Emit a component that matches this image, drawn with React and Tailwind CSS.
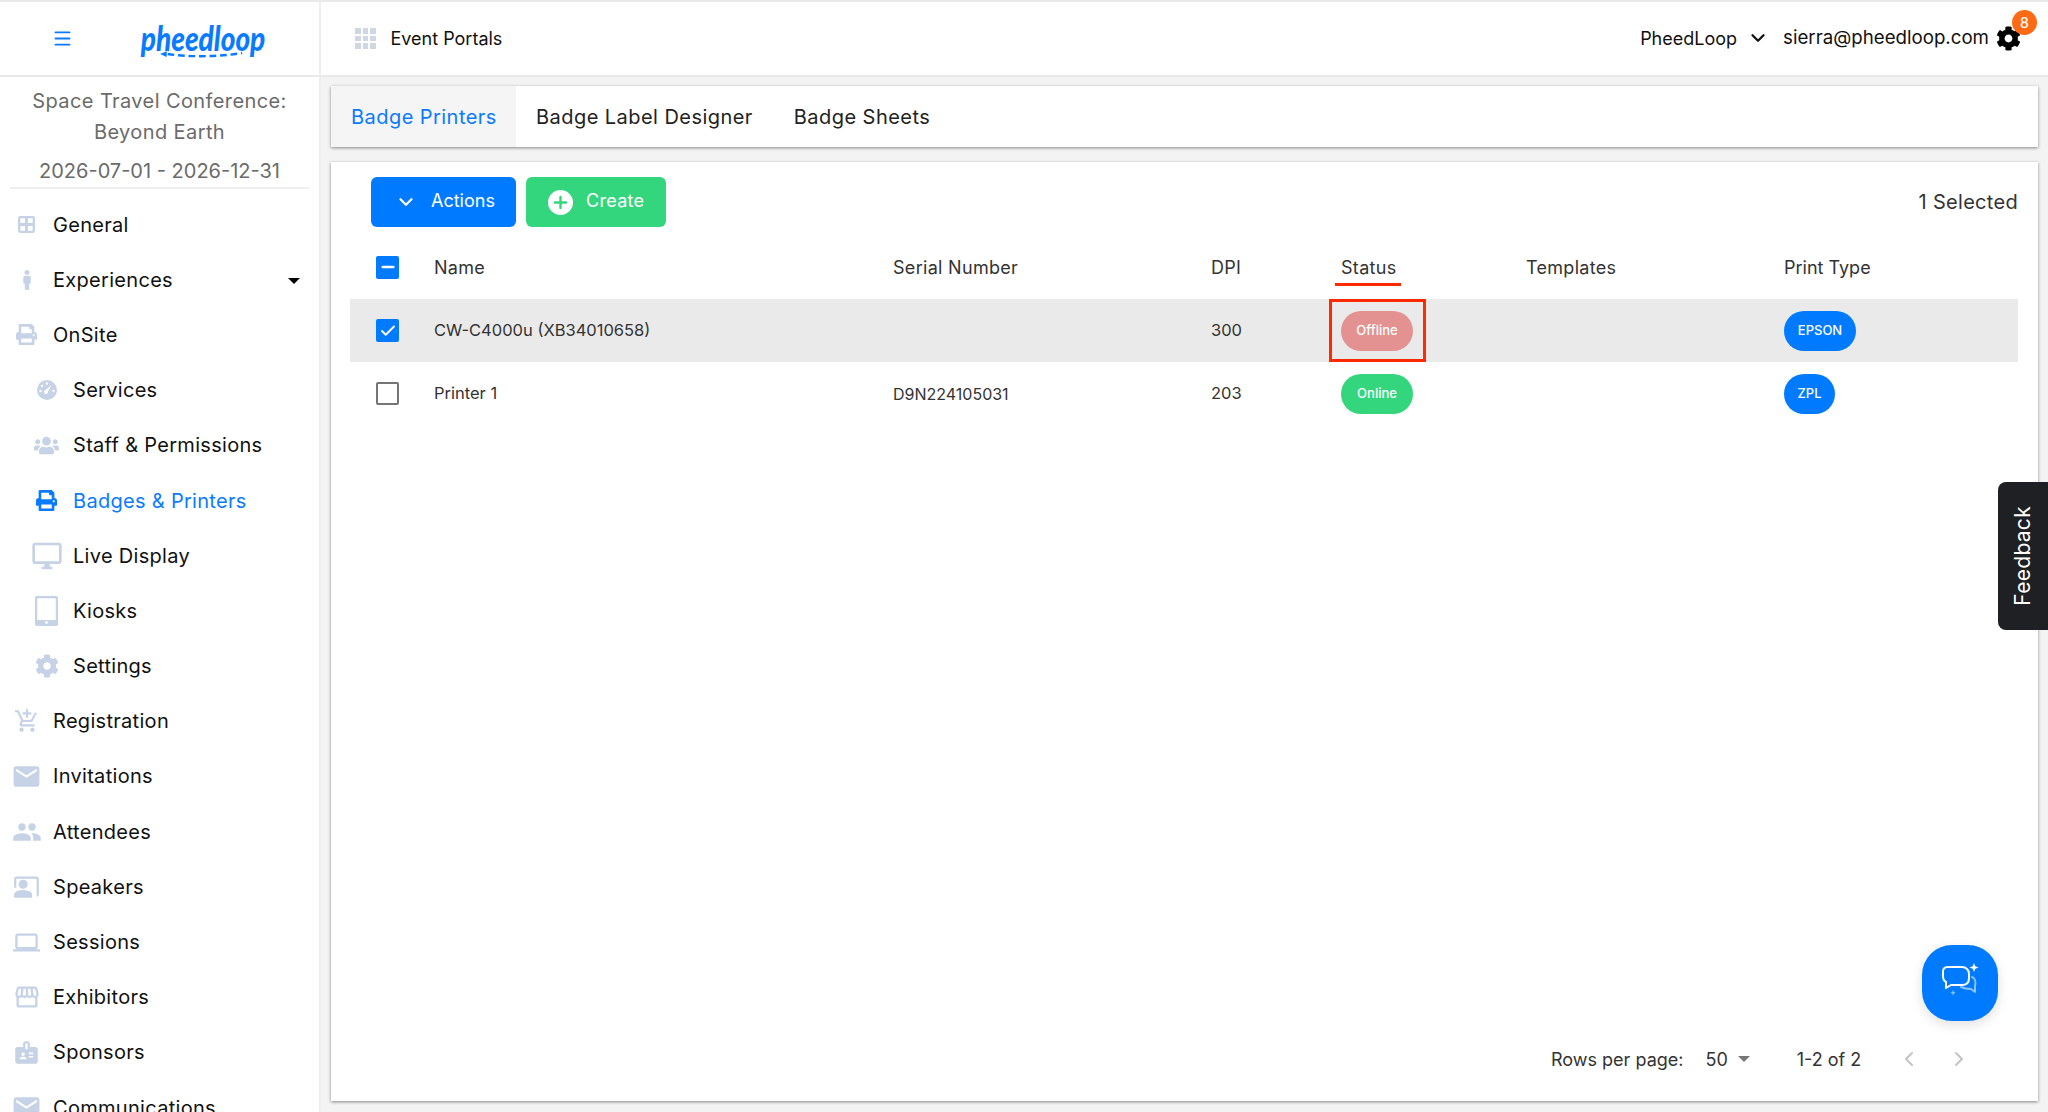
import { ChevronDown, ChevronLeft, ChevronRight, Menu, Check, Minus, Plus } from 'lucide-react';
import { FaMale, FaPrint, FaUsers, FaCog } from 'react-icons/fa';
import {
  MdOutlineDesktopWindows,
  MdAddShoppingCart,
  MdEmail,
  MdPeople,
  MdCoPresent,
  MdOutlineLaptop,
  MdOutlineStorefront,
  MdBadge,
} from 'react-icons/md';

const FONT = 'font-["Inter","Open_Sans",sans-serif]';

const GridIcon = ({ className }) => (
  <svg viewBox="0 0 18 18" className={className} fill="currentColor">
    <path d="M2.5 0h13A2.5 2.5 0 0 1 18 2.500v13a2.500 2.500 0 0 1-2.500 2.500h-13A2.500 2.500 0 0 1 0 15.500v-13A2.500 2.500 0 0 1 2.500 0zM2.500 2.500v5h5v-5zm8 0v5h5v-5zm-8 8v5h5v-5zm8 0v5h5v-5z" fillRule="evenodd" />
  </svg>
);

const GaugeIcon = ({ className }) => (
  <svg viewBox="0 0 20 20" className={className}>
    <circle cx="10" cy="10" r="10" fill="currentColor" />
    <circle cx="10" cy="3.500" r="1.200" fill="#fff" />
    <circle cx="5" cy="6" r="1.200" fill="#fff" />
    <circle cx="3.500" cy="11" r="1.200" fill="#fff" />
    <circle cx="16.500" cy="11" r="1.200" fill="#fff" />
    <path d="M14.500 5 L11 11.500 A2 2 0 1 1 8.600 10 z" fill="#fff" />
  </svg>
);

const TabletIcon = ({ className }) => (
  <svg viewBox="0 0 23 30" className={className}>
    <rect x="1" y="1" width="21" height="28" rx="2" fill="none" stroke="currentColor" strokeWidth="2.500" />
    <rect x="1" y="24" width="21" height="5" rx="1.500" fill="currentColor" />
    <circle cx="11.500" cy="26.500" r="1.400" fill="#fff" />
  </svg>
);

const NAV = [
  { label: 'General', icon: GridIcon, size: 'w-[17px] h-[17px]' },
  { label: 'Experiences', icon: FaMale, size: 'w-[20px] h-[20px]', caret: true },
  { label: 'OnSite', icon: FaPrint, size: 'w-[21px] h-[21px]' },
  { label: 'Services', icon: GaugeIcon, size: 'w-[20px] h-[20px]', sub: true },
  { label: 'Staff & Permissions', icon: FaUsers, size: 'w-[25px] h-[25px]', sub: true },
  { label: 'Badges & Printers', icon: FaPrint, size: 'w-[21px] h-[21px]', sub: true, active: true },
  { label: 'Live Display', icon: MdOutlineDesktopWindows, size: 'w-[32px] h-[32px]', sub: true },
  { label: 'Kiosks', icon: TabletIcon, size: 'w-[23px] h-[30px]', sub: true },
  { label: 'Settings', icon: FaCog, size: 'w-[24px] h-[24px]', sub: true },
  { label: 'Registration', icon: MdAddShoppingCart, size: 'w-[26px] h-[26px]' },
  { label: 'Invitations', icon: MdEmail, size: 'w-[31px] h-[31px]' },
  { label: 'Attendees', icon: MdPeople, size: 'w-[30px] h-[30px]' },
  { label: 'Speakers', icon: MdCoPresent, size: 'w-[27px] h-[27px]' },
  { label: 'Sessions', icon: MdOutlineLaptop, size: 'w-[27px] h-[27px]' },
  { label: 'Exhibitors', icon: MdOutlineStorefront, size: 'w-[28px] h-[28px]' },
  { label: 'Sponsors', icon: MdBadge, size: 'w-[27px] h-[27px]' },
  { label: 'Communications', icon: MdEmail, size: 'w-[31px] h-[31px]' },
];

const COLS = 'grid grid-cols-[84px_459px_318px_130px_185px_258px_234px] items-center';

function Checkbox({ state }) {
  if (state === 'off') {
    return <span className="block w-[23px] h-[23px] rounded-[2px] border-[2.5px] border-[#757575] bg-white" />;
  }
  return (
    <span className="flex items-center justify-center w-[23px] h-[23px] rounded-[2px] bg-[#007bff] text-white">
      {state === 'on' ? <Check size={18} strokeWidth={2.5} /> : <Minus size={18} strokeWidth={3.5} />}
    </span>
  );
}

function Pill({ children, className }) {
  return (
    <span className={`inline-flex items-center justify-center h-[40px] rounded-[20px] text-[13px] font-medium text-white ${className}`}>
      {children}
    </span>
  );
}

function Logo() {
  return (
    <div className="flex flex-col items-center text-[#0a7bff] w-[126px]">
      <span className="font-['Lato',sans-serif] italic font-black text-[28px] leading-[36px] scale-y-125">pheedloop</span>
      <svg viewBox="0 0 90 8" className="relative w-[86px] h-[8px] -mt-[4px]">
        <path d="M0 3 L7 0 L7 6 Z" fill="currentColor" />
        <path d="M8 3 Q45 8 86 2" fill="none" stroke="currentColor" strokeWidth="2.500" strokeDasharray="7 4" />
      </svg>
    </div>
  );
}

function ChatGlyph() {
  return (
    <svg viewBox="0 0 48 48" className="w-[48px] h-[48px]" fill="none" stroke="currentColor" strokeLinejoin="round" strokeLinecap="round">
      <path d="M11 8h15c4 0 7 3 7 7v4c0 5-3 7-7 7H15l-5 3 0-6c-2-1-3-3-3-6v-5c0-2 2-4 4-4z" strokeWidth="2" />
      <path d="M38 4l1.300 3.200L42.500 8.500 39.300 9.800 38 13l-1.300-3.200L33.500 8.500l3.200-1.300z" fill="currentColor" stroke="none" />
      <path d="M36 18c3 1 4 5 3 9l0 6-4-3c-3 0-6 0-10-2" strokeWidth="2" opacity="0.55" />
      <path d="M17 31l.8 2 2 .8-2 .8-.8 2-.8-2-2-.8 2-.8z" fill="currentColor" stroke="none" opacity="0.55" />
    </svg>
  );
}

export default function App() {
  return (
    <div className={`relative h-[1112px] w-full overflow-hidden bg-[#f3f3f3] text-[#212529] ${FONT}`}>
      {/* top bar */}
      <header className="flex h-[77px] border-t-2 border-b-2 border-[#e9e9e9] bg-white">
        <div className="flex w-[321px] shrink-0 items-center border-r-2 border-[#eeeeee]">
          <Menu size={21} strokeWidth={2.2} className="ml-[52px] text-[#0a7bff]" />
          <div className="ml-[67px]">
            <Logo />
          </div>
        </div>
        <div className="flex flex-1 items-center pl-[34px] pr-[27px]">
          <div className="grid grid-cols-3 gap-[2px] mr-[15px]">
            {Array.from({ length: 9 }).map((_, i) => (
              <span key={i} className="w-[5.500px] h-[5.500px] bg-[#cfd6e4]" />
            ))}
          </div>
          <span className="pb-[1px] text-[18px] text-[#111]">Event Portals</span>
          <div className="ml-auto flex items-center">
            <span className="text-[18px] text-[#111]">PheedLoop</span>
            <ChevronDown size={22} strokeWidth={2.5} className="ml-[10px] text-[#111]" />
            <span className="ml-[14px] text-[18.700px] text-[#111]">sierra@pheedloop.com</span>
            <span className="relative ml-[7px]">
              <FaCog className="w-[25px] h-[25px] text-black" />
              <span className="absolute -top-[16px] left-[16px] flex h-[25px] w-[25px] items-center justify-center rounded-full bg-[#ff6a13] text-[14px] font-medium text-white">
                8
              </span>
            </span>
          </div>
        </div>
      </header>

      <div className="flex h-[1035px]">
        {/* sidebar */}
        <aside className="w-[321px] shrink-0 overflow-hidden border-r-2 border-[#eeeeee] bg-white">
          <div className="mx-[10px] border-b-2 border-[#f0f0f0] pt-[9px] text-center text-[20px] leading-[31px] text-[#6b6b6b]">
            <p className="tracking-[0.4px]">Space Travel Conference:</p>
            <p className="tracking-[0.4px]">Beyond Earth</p>
            <p className="mt-[8px]">2026-07-01 - 2026-12-31</p>
          </div>
          <nav className="mt-[8px]">
            {NAV.map(({ label, icon: Icon, size, sub, active, caret }) => (
              <div key={label} className="relative flex h-[55.200px] items-center">
                <span className={`flex w-[53px] shrink-0 items-center justify-center ${sub ? 'ml-[20px]' : ''} ${active ? 'text-[#0a7bff]' : 'text-[#c6d2e5]'}`}>
                  <Icon className={size} />
                </span>
                <span className={`text-[20px] tracking-[0.3px] ${active ? 'text-[#0a7bff]' : 'text-[#111]'}`}>{label}</span>
                {caret && (
                  <span className="absolute right-[19px] top-[26px] h-0 w-0 border-x-[6px] border-t-[6px] border-x-transparent border-t-black" />
                )}
              </div>
            ))}
          </nav>
        </aside>

        {/* content */}
        <main className="flex min-w-0 flex-1 flex-col gap-[15px] px-[10px] pt-[9px] pb-[11px]">
          <div className="flex h-[61px] shrink-0 items-stretch bg-white text-[20px] tracking-[0.45px] shadow-[0_1px_3px_rgba(0,0,0,0.45)]">
            <div className="flex w-[185px] items-center bg-[#f5f5f5] pl-[20px] text-[#0a7bff]">Badge Printers</div>
            <div className="flex items-center pl-[20px] text-[#222]">Badge Label Designer</div>
            <div className="flex items-center pl-[41px] text-[#222]">Badge Sheets</div>
          </div>

          <section className="flex flex-1 flex-col bg-white pl-[19px] pr-[20px] pt-[15px] shadow-[0_1px_3px_rgba(0,0,0,0.45)]">
            <div className="flex items-center pl-[21px]">
              <button className="flex h-[50px] w-[145px] items-center rounded-[6px] bg-[#007bff] pl-[24px] text-[18px] text-white">
                <ChevronDown size={22} strokeWidth={2.5} />
                <span className="ml-[14px] pb-[3px]">Actions</span>
              </button>
              <button className="ml-[10px] flex h-[50px] w-[140px] items-center rounded-[6px] bg-[#34d67d] pl-[22px] text-[18px] tracking-[0.3px] text-white">
                <span className="flex h-[25px] w-[25px] items-center justify-center rounded-full bg-white text-[#34d67d]">
                  <Plus size={19} strokeWidth={3} />
                </span>
                <span className="ml-[13px] pb-[3px]">Create</span>
              </button>
              <span className="ml-auto text-[20px] tracking-[0.3px] text-[#333]">1 Selected</span>
            </div>

            <div className={`${COLS} mt-[10px] h-[62px] pb-[2px] text-[18px] tracking-[0.3px] text-[#333]`}>
              <span className="pl-[26px]"><Checkbox state="some" /></span>
              <span>Name</span>
              <span>Serial Number</span>
              <span>DPI</span>
              <span className="relative">
                Status
                <span className="absolute -left-[6px] top-[29px] h-[3px] w-[66px] bg-[#ff2a00]" />
              </span>
              <span>Templates</span>
              <span className="tracking-normal">Print Type</span>
            </div>

            <div className={`${COLS} h-[63px] bg-[#eaeaea] text-[16.500px] text-[#333]`}>
              <span className="pl-[26px]"><Checkbox state="on" /></span>
              <span>CW-C4000u (XB34010658)</span>
              <span />
              <span>300</span>
              <span className="relative flex h-full items-center">
                <Pill className="w-[72px] bg-[#e39291]">Offline</Pill>
                <span className="absolute -left-[12px] top-0 h-[63px] w-[97px] border-[3px] border-[#ff2a00]" />
              </span>
              <span />
              <span><Pill className="w-[72px] bg-[#007bff]">EPSON</Pill></span>
            </div>

            <div className={`${COLS} h-[63px] text-[16.500px] text-[#333]`}>
              <span className="pl-[26px]"><Checkbox state="off" /></span>
              <span>Printer 1</span>
              <span className="text-[16px]">D9N224105031</span>
              <span>203</span>
              <span><Pill className="w-[72px] bg-[#34d67d]">Online</Pill></span>
              <span />
              <span><Pill className="w-[51px] bg-[#007bff]">ZPL</Pill></span>
            </div>

            <div className="mt-auto flex h-[60px] items-center pb-[24px] pl-[1201px] text-[18px] text-[#333]">
              <span>Rows per page:</span>
              <span className="ml-[22px]">50</span>
              <span className="ml-[10px] h-0 w-0 border-x-[6px] border-t-[6px] border-x-transparent border-t-[#777]" />
              <span className="ml-[47px]">1-2 of 2</span>
              <ChevronLeft size={24} strokeWidth={2} className="ml-[36px] text-[#c4c4c4]" />
              <ChevronRight size={24} strokeWidth={2} className="ml-[26px] text-[#c4c4c4]" />
            </div>
          </section>
        </main>
      </div>

      {/* overlays */}
      <div className="absolute right-0 top-[482px] flex h-[148px] w-[50px] items-center justify-center rounded-l-[8px] bg-[#1f2023] text-white">
        <span className="rotate-180 text-[21px] tracking-[0.3px] [writing-mode:vertical-rl]">Feedback</span>
      </div>
      <button className="absolute left-[1922px] top-[945px] flex h-[76px] w-[76px] items-center justify-center rounded-[30px] bg-[#007bff] text-white shadow-[0_4px_12px_rgba(0,0,0,0.12)]">
        <ChatGlyph />
      </button>
    </div>
  );
}
